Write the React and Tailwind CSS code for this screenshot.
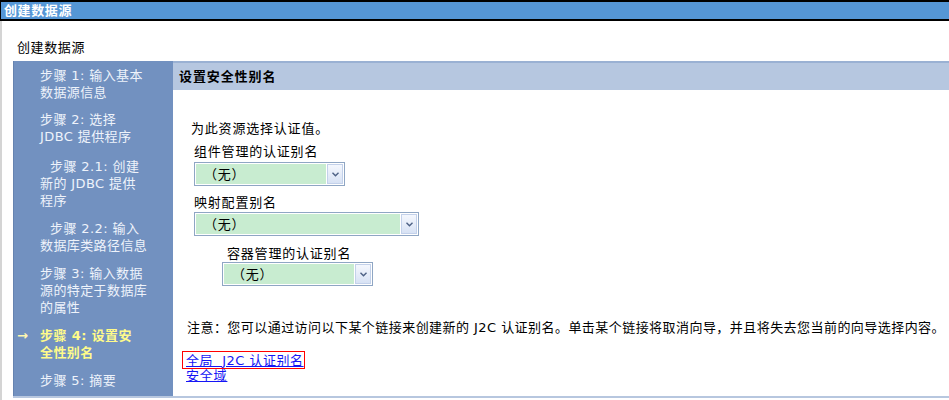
import React from "react";

const FONT = { fontFamily: '"DejaVu Sans", "Noto Sans CJK SC", sans-serif' };

function Chevron() {
  return (
    <svg width="7" height="5" viewBox="0 0 7 5">
      <path d="M0.5 0.8 L3.5 3.8 L6.5 0.8" fill="none" stroke="#4d6185" strokeWidth="1.4" />
    </svg>
  );
}

function Select({ className }) {
  return (
    <div className={"flex h-[24px] border border-[#8fa6c4] bg-white p-[1px] " + className}>
      <div className="flex flex-1 items-center bg-[#c8ecd0] pl-[8px] text-[13px] tracking-[0.8px] text-black">（无）</div>
      <div className="ml-[1px] flex w-[16px] items-center justify-center border border-[#c3d1ea] bg-gradient-to-b from-[#f4f7fd] to-[#d8e2f4]">
        <Chevron />
      </div>
    </div>
  );
}

function Step({ lines, className = "", active = false, indentFirst = false }) {
  return (
    <div className={"relative " + className}>
      {active && (
        <span className="absolute left-[-23px] top-0 text-[13px] font-bold text-[#fff7b0]">→</span>
      )}
      {lines.map((l, i) => (
        <div
          key={i}
          className={
            "whitespace-nowrap " +
            (i === 0 && indentFirst ? "pl-[10px] " : "") +
            (active ? "font-bold text-[#fffb8a]" : "text-[#eef3fb]")
          }
        >
          {l}
        </div>
      ))}
    </div>
  );
}

export default function App() {
  return (
    <div className="relative h-[400px] w-[949px] overflow-hidden bg-white text-[13px] leading-[17px]" style={FONT}>
      <div className="flex h-[21px] items-center border-y-2 border-l border-black bg-[#5596d6] pl-[3px] text-[13px] font-bold tracking-[0.6px] text-white">
        创建数据源
      </div>
      <div className="h-[379px] border-l-2 border-[#d4d4d4]">
        <div className="pl-[15px] pt-[18px] leading-[17px] tracking-[0.6px] text-black">创建数据源</div>
        <div className="ml-[11px] mt-[5px] flex h-[337px] border-b-2 border-[#b7c7df]">
          <div className="w-[160px] shrink-0 overflow-hidden border-l border-[#6683b0] bg-[#7291c0] pl-[26px] pt-[6px] text-[13px] leading-[17px] tracking-[0.4px]">
            <Step lines={["步骤 1: 输入基本", "数据源信息"]} />
            <Step className="mt-[10px]" lines={["步骤 2: 选择", "JDBC 提供程序"]} />
            <Step className="mt-[13px]" indentFirst lines={["步骤 2.1: 创建", "新的 JDBC 提供", "程序"]} />
            <Step className="mt-[11px]" indentFirst lines={["步骤 2.2: 输入", "数据库类路径信息"]} />
            <Step className="mt-[11px]" lines={["步骤 3: 输入数据", "源的特定于数据库", "的属性"]} />
            <Step className="mt-[11px]" active lines={["步骤 4: 设置安", "全性别名"]} />
            <Step className="mt-[11px]" lines={["步骤 5: 摘要"]} />
          </div>
          <div className="min-w-0 flex-1">
            <div className="flex h-[29px] items-center border-t-2 border-[#9ab1d3] bg-[#b6c7e0] pl-[6px] text-[13px] font-bold tracking-[0.9px] text-black">
              设置安全性别名
            </div>
            <div className="tracking-[0.8px] text-black">
              <div className="ml-[18px] mt-[30px]">为此资源选择认证值。</div>
              <div className="ml-[21px] mt-[6px]">组件管理的认证别名</div>
              <Select className="ml-[21px] mt-[2px] w-[151px]" />
              <div className="ml-[21px] mt-[8px]">映射配置别名</div>
              <Select className="ml-[21px] mt-[1px] w-[225px]" />
              <div className="ml-[54px] mt-[9px]">容器管理的认证别名</div>
              <Select className="ml-[49px] mt-[0px] w-[151px]" />
              <div className="ml-[14px] mt-[33px] whitespace-nowrap tracking-[0.45px]">
                注意：您可以通过访问以下某个链接来创建新的 J2C 认证别名。单击某个链接将取消向导，并且将失去您当前的向导选择内容。
              </div>
              <div className="ml-[9px] mt-[15px] flex h-[18px] w-[123px] items-center border border-[#ff0000] pl-[3px]">
                <a href="#" className="whitespace-nowrap tracking-[0.5px] text-[#1515f5] underline">全局 &nbsp;J2C 认证别名</a>
              </div>
              <div className="ml-[13px] mt-[-1px] leading-[15px]">
                <a href="#" className="text-[#1515f5] underline">安全域</a>
              </div>
            </div>
          </div>
        </div>
      </div>
    </div>
  );
}
